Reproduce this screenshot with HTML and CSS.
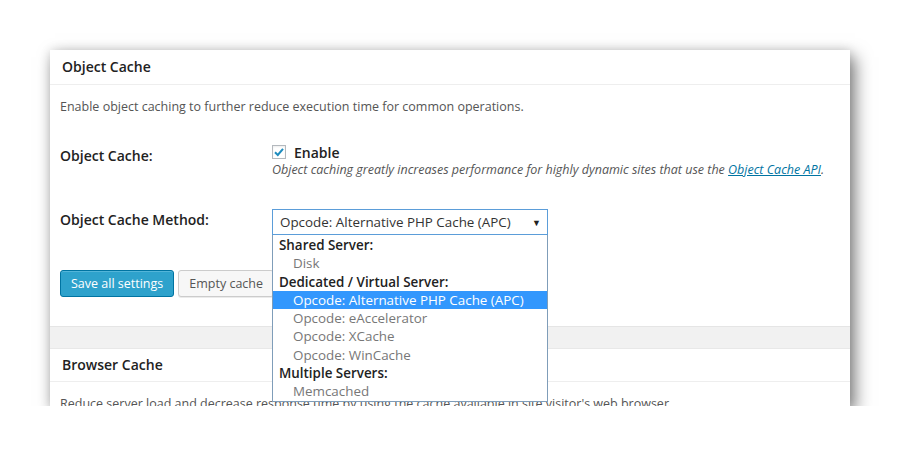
FILE: index.html
```html
<!DOCTYPE html>
<html lang="en">
<head>
  <meta charset="UTF-8">
  <title>Object Cache</title>
  <link rel="stylesheet" href="styles.css">
</head>
<body>

  <div class="card">
    <div class="card-head">Object Cache</div>
    <div class="card-body">
      <p class="desc">Enable object caching to further reduce execution time for common operations.</p>

      <div class="row row-enable">
        <div class="label">Object Cache:</div>
        <div class="field">
          <label class="check">
            <span class="box">
              <svg width="12" height="12" viewBox="0 0 12 12"><path d="M2 6.2 L4.8 9 L10 2.8" fill="none" stroke="#1e8cbe" stroke-width="2"/></svg>
            </span>
            <b>Enable</b>
          </label>
          <div class="hint">Object caching greatly increases performance for highly dynamic sites that use the <a href="#">Object Cache API</a>.</div>
        </div>
      </div>

      <div class="row row-method">
        <div class="label label-method">Object Cache Method:</div>
        <div class="field">
          <div class="select">
            <span>Opcode: Alternative PHP Cache (APC)</span>
            <span class="arrow">&#9660;</span>
          </div>
        </div>
      </div>

      <div class="buttons">
        <button class="btn btn-primary">Save all settings</button>
        <button class="btn">Empty cache</button>
      </div>
    </div>

    <div class="gap"></div>

    <div class="card-head card-head-2">Browser Cache</div>
    <div class="card-body">
      <p class="desc desc-2">Reduce server load and decrease response time by using the cache available in site visitor's web browser.</p>
    </div>

    <!-- open select list -->
    <ul class="dropdown">
      <li class="group">Shared Server:</li>
      <li class="opt">Disk</li>
      <li class="group">Dedicated / Virtual Server:</li>
      <li class="opt selected">Opcode: Alternative PHP Cache (APC)</li>
      <li class="opt">Opcode: eAccelerator</li>
      <li class="opt">Opcode: XCache</li>
      <li class="opt">Opcode: WinCache</li>
      <li class="group">Multiple Servers:</li>
      <li class="opt">Memcached</li>
    </ul>
  </div>

</body>
</html>
```

FILE: styles.css
```css
body {
  margin: 0;
  background: #fff;
  font-family: "Open Sans", "Liberation Sans", sans-serif;
  font-size: 12.5px;
  color: #444;
}
.card {
  position: relative;
  margin: 50px 0 0 50px;
  width: 800px;
  height: 356px;
  overflow: hidden;
  background: #fff;
  box-shadow: 5px 7px 16px rgba(0, 0, 0, 0.5), 0 0 10px rgba(0, 0, 0, 0.12);
}
.card-head {
  height: 34px;
  line-height: 34px;
  padding: 0 12px;
  border-bottom: 1px solid #eee;
  font-size: 14px;
  font-weight: 600;
  color: #222;
}
.card-head-2 {
  height: 32px;
  line-height: 32px;
}
.card-body {
  padding: 0 10px;
}
.desc {
  margin: 13px 0 0;
  line-height: 18px;
  color: #555;
  white-space: nowrap;
}
.desc-2 {
  margin-top: 13px;
}
.row {
  display: flex;
}
.row-enable {
  margin-top: 27px;
}
.row-method {
  margin-top: 30px;
}
.label {
  flex: none;
  width: 212px;
  padding-top: 4px;
  line-height: 18px;
  font-size: 14px;
  font-weight: 600;
  color: #222;
}
.label-method {
  padding-top: 2px;
}
.check {
  display: flex;
  align-items: center;
  height: 18px;
}
.check b {
  font-size: 14px;
  font-weight: 600;
  color: #222;
  margin-left: 8px;
}
.box {
  width: 14px;
  height: 14px;
  box-sizing: border-box;
  border: 1px solid #b4b9be;
  background: #fff;
  display: flex;
  align-items: center;
  justify-content: center;
  box-shadow: inset 0 1px 2px rgba(0, 0, 0, 0.07);
}
.hint {
  line-height: 18px;
  font-style: italic;
  color: #555;
  white-space: nowrap;
}
.hint a {
  color: #0074a2;
}
.select {
  width: 276px;
  height: 26px;
  box-sizing: border-box;
  border: 1px solid #5b9dd9;
  display: flex;
  align-items: center;
  justify-content: space-between;
  padding: 0 6px 0 7px;
  font-size: 13.4px;
  color: #333;
}
.arrow {
  font-size: 9px;
  color: #222;
}
.buttons {
  display: flex;
  gap: 4px;
  margin-top: 35px;
  padding-bottom: 29px;
}
.btn {
  height: 27px;
  padding: 0 10px;
  font-family: inherit;
  font-size: 12.5px;
  border: 1px solid #ccc;
  border-radius: 3px;
  background: #f7f7f7;
  color: #555;
  box-shadow: 0 1px 0 rgba(0, 0, 0, 0.08);
}
.btn-primary {
  background: #2ea2cc;
  border-color: #0074a2;
  color: #fff;
  box-shadow: inset 0 1px 0 rgba(120, 200, 230, 0.5);
}
.gap {
  height: 21px;
  background: #f1f1f1;
  border-top: 1px solid #e5e5e5;
  border-bottom: 1px solid #e8e8e8;
}
.dropdown {
  position: absolute;
  left: 222px;
  top: 185px;
  width: 276px;
  box-sizing: border-box;
  margin: 0;
  padding: 1px 0 0;
  list-style: none;
  background: #fff;
  border: 1px solid #7f9db9;
  border-top: none;
  font-size: 13.4px;
}
.dropdown li {
  line-height: 18.3px;
  white-space: nowrap;
}
.group {
  padding-left: 6px;
  font-weight: 600;
  color: #222;
}
.opt {
  padding-left: 20px;
  color: #777;
}
.opt.selected {
  background: #3297fd;
  color: #fff;
}
```
